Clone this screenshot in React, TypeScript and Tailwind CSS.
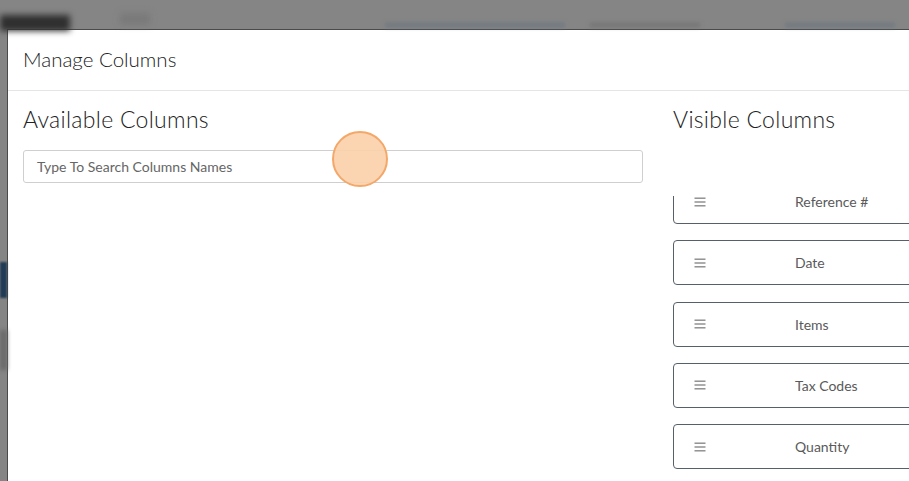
import React from "react";

const visible = ["Reference #", "Date", "Items", "Tax Codes", "Quantity"];

function Grip() {
  return (
    <svg width="12" height="10" viewBox="0 0 12 10" className="shrink-0">
      <rect x="0.5" y="0.5" width="11" height="1.4" fill="#8a8a8a" />
      <rect x="0.5" y="4.3" width="11" height="1.4" fill="#8a8a8a" />
      <rect x="0.5" y="8.1" width="11" height="1.4" fill="#8a8a8a" />
    </svg>
  );
}

export default function App() {
  return (
    <div
      className="relative flex h-[481px] w-[909px] flex-col overflow-hidden bg-[#858585]"
      style={{ fontFamily: "Lato, 'Open Sans', sans-serif" }}
    >
      {/* blurred page behind the overlay */}
      <div className="flex h-[29px] shrink-0 items-end">
        <div className="mb-[-2px] h-[16px] w-[70px] bg-[#2f2f2f] blur-[3px]" />
        <div className="mb-[4px] ml-[50px] h-[12px] w-[30px] bg-[#7a7a7a] blur-[3px]" />
        <div className="mb-[2px] ml-[235px] h-[4px] w-[180px] bg-[#6e7780] blur-[2px]" />
        <div className="mb-[2px] ml-[25px] h-[4px] w-[110px] bg-[#737373] blur-[2px]" />
        <div className="mb-[2px] ml-[85px] h-[4px] w-[110px] bg-[#6e7780] blur-[2px]" />
      </div>

      <div className="flex flex-1">
        <div className="flex w-[7px] shrink-0 flex-col">
          <div className="mt-[233px] h-[36px] bg-[#213a55] blur-[1px]" />
          <div className="mt-[32px] h-[40px] bg-[#6a6a6a] blur-[2px]" />
        </div>

        <div className="flex-1 border-t border-l border-[#4a4a4a] bg-white">
          <div className="flex h-[61px] items-center border-b border-[#e5e5e5] px-[15px] pb-[2px]">
            <span className="text-[20.5px] font-light text-[#222]">Manage Columns</span>
          </div>

          <div className="flex gap-[30px] pl-[15px] pt-[13px]">
            <div className="w-[620px] shrink-0">
              <h2 className="text-[23px] leading-[30px] font-light tracking-[0.3px] text-[#222]">
                Available Columns
              </h2>
              <div className="mt-[16px] flex h-[33px] items-center rounded-[3px] border border-[#cfcfcf] px-[13px] text-[14px] text-[#666]">
                Type To Search Columns Names
              </div>
            </div>

            <div className="w-[260px] shrink-0">
              <h2 className="text-[23px] leading-[30px] font-light tracking-[0.3px] text-[#222]">
                Visible Columns
              </h2>
              <div className="mt-[62px] h-[300px] overflow-hidden">
                <div className="-mt-[17px] flex flex-col gap-[16.3px]">
                  {visible.map((v) => (
                    <div
                      key={v}
                      className="flex h-[45px] items-center rounded-[4px] border border-[#55606b] pl-[20px] text-[14px] text-[#5a5a5a]"
                    >
                      <Grip />
                      <span className="ml-[89px]">{v}</span>
                    </div>
                  ))}
                </div>
              </div>
            </div>
          </div>
        </div>
      </div>

      {/* click indicator */}
      <div className="absolute left-[332px] top-[131px] h-[56px] w-[56px] rounded-full border-2 border-[#f3a86a] bg-[#fbcfa9]/90" />
    </div>
  );
}
